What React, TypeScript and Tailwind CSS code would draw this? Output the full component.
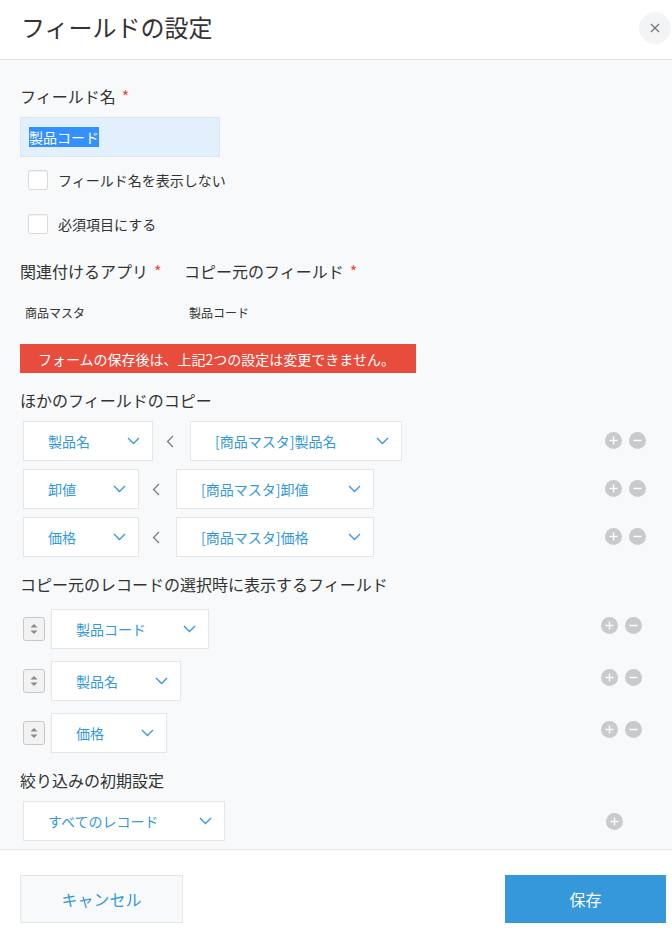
import React from "react";

function Chevron() {
  return (
    <svg width="13" height="8" viewBox="0 0 13 8" className="shrink-0">
      <polyline points="1,1 6.5,6.5 12,1" fill="none" stroke="#3498db" strokeWidth="1.3" />
    </svg>
  );
}

function Dropdown({ label, w }: { label: string; w: string }) {
  return (
    <div className={`${w} h-10 bg-white border border-[#e3e7e8] flex items-center justify-between pl-6 pr-3 shrink-0`}>
      <span className="text-[14px] text-[#3498db] leading-5 whitespace-nowrap">{label}</span>
      <Chevron />
    </div>
  );
}

function Lt() {
  return (
    <svg width="8" height="13" viewBox="0 0 8 13">
      <polyline points="7,1 1.5,6.5 7,12" fill="none" stroke="#777" strokeWidth="1.2" />
    </svg>
  );
}

function PlusIcon() {
  return (
    <svg width="17" height="17" viewBox="0 0 17 17">
      <circle cx="8.5" cy="8.5" r="8.5" fill="#c9cacc" />
      <line x1="4.5" y1="8.5" x2="12.5" y2="8.5" stroke="#fff" strokeWidth="1.4" />
      <line x1="8.5" y1="4.5" x2="8.5" y2="12.5" stroke="#fff" strokeWidth="1.4" />
    </svg>
  );
}

function MinusIcon() {
  return (
    <svg width="17" height="17" viewBox="0 0 17 17">
      <circle cx="8.5" cy="8.5" r="8.5" fill="#c9cacc" />
      <line x1="4.5" y1="8.5" x2="12.5" y2="8.5" stroke="#fff" strokeWidth="1.4" />
    </svg>
  );
}

function Handle() {
  return (
    <div className="w-[22px] h-6 rounded-[3px] border border-[#c8c8c8] bg-[#f2f2f2] flex items-center justify-center shrink-0">
      <svg width="8" height="12" viewBox="0 0 8 12">
        <polygon points="4,1 7.5,4.5 0.5,4.5" fill="#8a8a8a" />
        <polygon points="0.5,7.5 7.5,7.5 4,11" fill="#8a8a8a" />
      </svg>
    </div>
  );
}

function Checkbox({ label }: { label: string }) {
  return (
    <div className="flex items-center h-5 pl-2">
      <div className="w-5 h-5 bg-white border border-[#dcdcdc] rounded-[2px] shadow-[inset_0_1px_1px_rgba(0,0,0,0.06)]" />
      <span className="ml-[10px] text-[14px] leading-5 text-[#333]">{label}</span>
    </div>
  );
}

function Req() {
  return <span className="text-[#e74c3c] ml-[6px]">*</span>;
}

export default function App() {
  const copyRows = [
    { l: "製品名", lw: "w-[130px]", r: "[商品マスタ]製品名", rw: "w-[212px]" },
    { l: "卸値", lw: "w-[116px]", r: "[商品マスタ]卸値", rw: "w-[198px]" },
    { l: "価格", lw: "w-[116px]", r: "[商品マスタ]価格", rw: "w-[198px]" },
  ];
  const showRows = [
    { l: "製品コード", w: "w-[158px]" },
    { l: "製品名", w: "w-[130px]" },
    { l: "価格", w: "w-[116px]" },
  ];
  return (
    <div className="w-[672px] h-[933px] bg-white font-['Noto_Sans_CJK_JP',sans-serif] text-[#333] flex flex-col overflow-hidden">
      {/* Header */}
      <div className="h-[60px] border-b border-[#e3e7e8] flex items-center justify-between pl-[21px] shrink-0">
        <h1 className="text-[24px] leading-8 text-[#333] font-normal -mt-[6px]">フィールドの設定</h1>
        <button className="w-8 h-8 rounded-full bg-[#f3f4f6] flex items-center justify-center mr-[1px] -mt-[3px]">
          <svg width="10" height="10" viewBox="0 0 10 10">
            <line x1="1" y1="1" x2="9" y2="9" stroke="#777" strokeWidth="1.2" />
            <line x1="9" y1="1" x2="1" y2="9" stroke="#777" strokeWidth="1.2" />
          </svg>
        </button>
      </div>

      {/* Body */}
      <div className="flex-1 bg-[#f7f9fa] pl-5 pt-6 flex flex-col">
        <div className="text-[16px] leading-6">
          フィールド名<Req />
        </div>
        <div className="mt-[9px] w-[200px] h-10 bg-[#e2f0fd] border border-[#dfe6ea] flex items-center pl-2">
          <span className="bg-[#3390ff] text-white text-[14px] leading-5">製品コード</span>
        </div>
        <div className="mt-[13px]">
          <Checkbox label="フィールド名を表示しない" />
        </div>
        <div className="mt-[24px]">
          <Checkbox label="必須項目にする" />
        </div>

        <div className="mt-[25px] flex text-[16px] leading-6">
          <div className="w-[164px]">
            関連付けるアプリ<Req />
          </div>
          <div>
            コピー元のフィールド<Req />
          </div>
        </div>
        <div className="mt-[21px] flex text-[12px] leading-[18px] text-[#333]">
          <div className="w-[164px] pl-[5px]">商品マスタ</div>
          <div className="pl-[5px]">製品コード</div>
        </div>

        <div className="mt-[22px] w-[396px] h-[29px] bg-[#e74c3c] text-white text-[14px] leading-5 flex items-center pl-[18px]">
          フォームの保存後は、上記2つの設定は変更できません。
        </div>

        <div className="mt-[15px] text-[16px] leading-6">ほかのフィールドのコピー</div>
        <div className="mt-[9px] flex flex-col gap-2">
          {copyRows.map((r) => (
            <div key={r.l} className="flex items-center pl-[3px] pr-[26px]">
              <Dropdown label={r.l} w={r.lw} />
              <div className="w-[37px] flex justify-center pr-[3px]">
                <Lt />
              </div>
              <Dropdown label={r.r} w={r.rw} />
              <div className="ml-auto flex gap-[7px] -mt-[2px]">
                <PlusIcon />
                <MinusIcon />
              </div>
            </div>
          ))}
        </div>

        <div className="mt-[15px] text-[16px] leading-6">コピー元のレコードの選択時に表示するフィールド</div>
        <div className="mt-[13px] flex flex-col gap-3">
          {showRows.map((r) => (
            <div key={r.l} className="flex items-center pl-[3px] pr-[30px]">
              <Handle />
              <div className="ml-[6px]">
                <Dropdown label={r.l} w={r.w} />
              </div>
              <div className="ml-auto flex gap-[7px] -mt-[8px]">
                <PlusIcon />
                <MinusIcon />
              </div>
            </div>
          ))}
        </div>

        <div className="mt-[15px] text-[16px] leading-6">絞り込みの初期設定</div>
        <div className="mt-[9px] flex items-center pl-[3px] pr-[49px]">
          <Dropdown label="すべてのレコード" w="w-[202px]" />
          <div className="ml-auto">
            <PlusIcon />
          </div>
        </div>
      </div>

      {/* Footer */}
      <div className="h-[84px] border-t border-[#e3e7e8] bg-white flex items-start justify-between pt-[25px] pl-5 pr-[6px] shrink-0">
        <button className="w-[163px] h-12 bg-[#f7f9fa] border border-[#e3e7e8] text-[#3498db] text-[16px]">
          キャンセル
        </button>
        <button className="w-[161px] h-12 bg-[#3498db] text-white text-[16px]">保存</button>
      </div>
    </div>
  );
}
